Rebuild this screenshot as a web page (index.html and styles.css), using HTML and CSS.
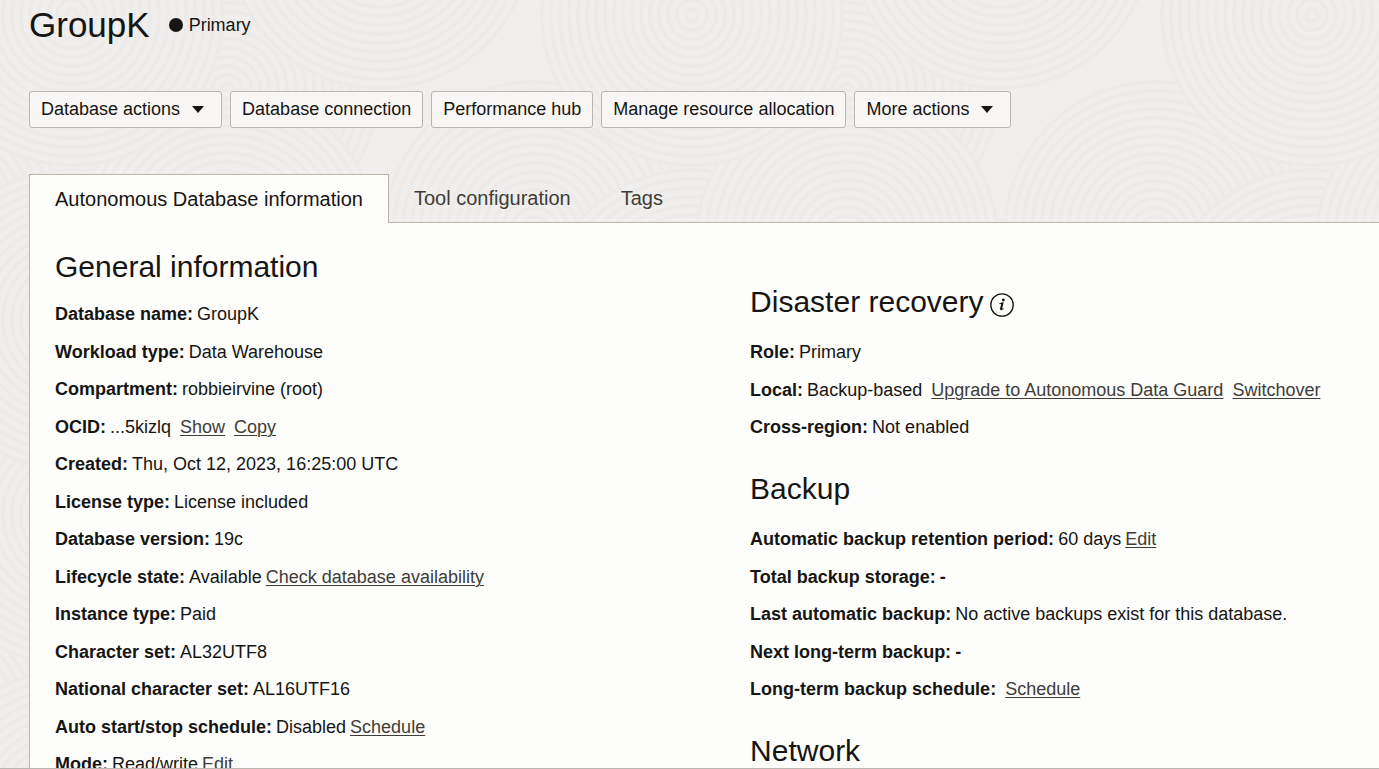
FILE: index.html
```html
<!DOCTYPE html>
<html lang="en">
<head>
<meta charset="utf-8">
<title>GroupK</title>
<link rel="stylesheet" href="styles.css">
</head>
<body>
<svg class="backdrop" aria-hidden="true">
  <defs>
    <radialGradient id="ring" gradientUnits="userSpaceOnUse" cx="0" cy="0" r="9" spreadMethod="repeat">
      <stop offset="0" stop-color="#f0efed"/>
      <stop offset="0.35" stop-color="#f0efed"/>
      <stop offset="0.7" stop-color="#ebeae8"/>
      <stop offset="1" stop-color="#f0efed"/>
    </radialGradient>
    <circle id="disc" r="152" fill="url(#ring)"/>
    <g id="cluster">
      <use href="#disc" x="0" y="-215"/>
      <use href="#disc" x="155" y="90"/>
      <use href="#disc" x="0" y="320"/>
      <use href="#disc" x="310" y="370"/>
      <use href="#disc" x="155" y="240"/>
      <use href="#disc" x="463" y="232"/>
      <use href="#disc" x="308" y="-62"/>
      <use href="#disc" x="0" y="15"/>
    </g>
    <pattern id="waves" patternUnits="userSpaceOnUse" x="72" y="0" width="620" height="500">
      <rect width="620" height="500" fill="#f0efed"/>
      <use href="#cluster" x="0" y="500"/>
      <use href="#cluster" x="620" y="500"/>
      <use href="#cluster" x="0" y="0"/>
      <use href="#cluster" x="620" y="0"/>
    </pattern>
  </defs>
  <rect width="100%" height="100%" fill="url(#waves)"/>
</svg>
<div class="app">
  <main class="page">
    <header class="heading">
      <h1 class="title">GroupK</h1>
      <span class="status"><span class="dot"></span>Primary</span>
    </header>
    <div class="actions">
      <button class="btn btn-menu" type="button">Database actions<svg class="caret" viewBox="0 0 12 7" aria-hidden="true"><path d="M0 0h12L6 7z"/></svg></button>
      <button class="btn" type="button">Database connection</button>
      <button class="btn" type="button">Performance hub</button>
      <button class="btn" type="button">Manage resource allocation</button>
      <button class="btn btn-menu" type="button">More actions<svg class="caret" viewBox="0 0 12 7" aria-hidden="true"><path d="M0 0h12L6 7z"/></svg></button>
    </div>
    <div class="tabs" role="tablist">
      <button class="tab tab-active" type="button" role="tab" aria-selected="true">Autonomous Database information</button>
      <button class="tab" type="button" role="tab" aria-selected="false">Tool configuration</button>
      <button class="tab" type="button" role="tab" aria-selected="false">Tags</button>
    </div>
    <div class="panel" role="tabpanel">
      <section class="column">
        <h2 class="section-title">General information</h2>
        <dl class="facts">
          <div class="fact"><dt>Database name:</dt><dd>GroupK</dd></div>
          <div class="fact"><dt>Workload type:</dt><dd>Data Warehouse</dd></div>
          <div class="fact"><dt>Compartment:</dt><dd>robbieirvine (root)</dd></div>
          <div class="fact fact-wide"><dt>OCID:</dt><dd>...5kizlq</dd><dd><a href="#">Show</a></dd><dd><a href="#">Copy</a></dd></div>
          <div class="fact"><dt>Created:</dt><dd>Thu, Oct 12, 2023, 16:25:00 UTC</dd></div>
          <div class="fact"><dt>License type:</dt><dd>License included</dd></div>
          <div class="fact"><dt>Database version:</dt><dd>19c</dd></div>
          <div class="fact"><dt>Lifecycle state:</dt><dd>Available</dd><dd><a href="#">Check database availability</a></dd></div>
          <div class="fact"><dt>Instance type:</dt><dd>Paid</dd></div>
          <div class="fact"><dt>Character set:</dt><dd>AL32UTF8</dd></div>
          <div class="fact"><dt>National character set:</dt><dd>AL16UTF16</dd></div>
          <div class="fact"><dt>Auto start/stop schedule:</dt><dd>Disabled</dd><dd><a href="#">Schedule</a></dd></div>
          <div class="fact"><dt>Mode:</dt><dd>Read/write</dd><dd><a href="#">Edit</a></dd></div>
        </dl>
      </section>
      <div class="column column-side">
        <section>
          <h2 class="section-title">Disaster recovery<svg class="info" viewBox="0 0 24 24" role="img" aria-label="Information"><circle cx="12" cy="12" r="11.2" fill="none" stroke="currentColor" stroke-width="1.3"/><circle cx="13.3" cy="7" r="1.4" fill="currentColor"/><path d="M9.6 10.8c1-.3 2-.6 3-.9l-1.7 6c-.2.9.2 1 1.2.4l1.3-.9" fill="none" stroke="currentColor" stroke-width="1.2"/><path d="M12.6 10l-1.8 6.4" stroke="currentColor" stroke-width="1.9"/></svg></h2>
          <dl class="facts">
            <div class="fact"><dt>Role:</dt><dd>Primary</dd></div>
            <div class="fact fact-wide"><dt>Local:</dt><dd>Backup-based</dd><dd><a href="#">Upgrade to Autonomous Data Guard</a></dd><dd><a href="#">Switchover</a></dd></div>
            <div class="fact"><dt>Cross-region:</dt><dd>Not enabled</dd></div>
          </dl>
        </section>
        <section>
          <h2 class="section-title">Backup</h2>
          <dl class="facts">
            <div class="fact"><dt>Automatic backup retention period:</dt><dd>60 days</dd><dd><a href="#">Edit</a></dd></div>
            <div class="fact"><dt>Total backup storage:</dt><dd class="empty">-</dd></div>
            <div class="fact"><dt>Last automatic backup:</dt><dd>No active backups exist for this database.</dd></div>
            <div class="fact"><dt>Next long-term backup:</dt><dd class="empty">-</dd></div>
            <div class="fact fact-link"><dt>Long-term backup schedule:</dt><dd><a href="#">Schedule</a></dd></div>
          </dl>
        </section>
        <section>
          <h2 class="section-title">Network</h2>
        </section>
      </div>
    </div>
  </main>
  <footer class="footer"></footer>
</div>
</body>
</html>
```
FILE: styles.css
```css
* {
  box-sizing: border-box;
}

body {
  margin: 0;
  background: #f0efed;
  color: #161513;
  font-family: "Liberation Sans", Arial, sans-serif;
  font-size: 18px;
  line-height: 24px;
}

h1, h2, dl, dt, dd {
  margin: 0;
}

a {
  color: #403c38;
  text-decoration: underline;
  text-decoration-thickness: 1px;
  text-underline-offset: 2px;
}

.backdrop {
  position: absolute;
  inset: 0;
  width: 100%;
  height: 100%;
}

.app {
  position: relative;
  display: flex;
  flex-direction: column;
  height: 100vh;
}

.page {
  display: flex;
  flex: 1;
  flex-direction: column;
  min-height: 0;
  padding-left: 29px;
  overflow: hidden;
}

.heading {
  display: flex;
  align-items: center;
  gap: 19px;
  padding-top: 4px;
}

.title {
  font-size: 35px;
  font-weight: 400;
  line-height: 42px;
}

.status {
  display: flex;
  align-items: center;
  gap: 6px;
}

.dot {
  width: 14px;
  height: 14px;
  border-radius: 50%;
  background: #161513;
}

.actions {
  display: flex;
  flex-wrap: wrap;
  gap: 8px;
  padding: 45px 24px 46px 0;
}

.btn {
  display: flex;
  align-items: center;
  gap: 12px;
  padding: 5px 11px 6px;
  border: 1px solid #b9b5af;
  border-radius: 3px;
  background: #f8f7f5;
  color: inherit;
  font: inherit;
}

.btn-menu {
  padding-right: 17px;
}

.caret {
  width: 12px;
  height: 7px;
  fill: #161513;
}

.tabs {
  position: relative;
  display: flex;
}

.tab {
  padding: 11px 24px 12px;
  border: 1px solid transparent;
  border-bottom: 0;
  background: transparent;
  color: #403c38;
  font: inherit;
  font-size: 20px;
}

.tab-active {
  margin-bottom: -1px;
  padding: 12px 25px;
  border-color: #b9b5a9;
  background: #fdfdfb;
  color: #161513;
}

.panel {
  display: grid;
  flex: 1 0 auto;
  grid-template-columns: 21fr 19fr;
  padding: 26px 0 25px 25px;
  border-top: 1px solid #b9b5a9;
  border-left: 1px solid #b9b5af;
  background: #fdfdfb;
}

.column-side {
  padding-top: 35px;
}

.section-title {
  display: flex;
  align-items: center;
  gap: 6px;
  margin-bottom: 17px;
  font-size: 30px;
  font-weight: 400;
  line-height: 36px;
}

.column-side .section-title {
  margin-bottom: 20px;
}

.info {
  width: 24px;
  height: 24px;
  margin-top: 5px;
}

.facts {
  display: flex;
  flex-direction: column;
}

.fact {
  display: flex;
  gap: 4px;
  margin-bottom: 14px;
}

.fact:nth-child(even) {
  margin-bottom: 13px;
}

.fact-wide,
.fact-link {
  gap: 9px;
}

.fact-wide dt {
  margin-right: -5px;
}

.facts dt,
.empty {
  font-weight: 700;
}

section + section {
  padding-top: 18px;
}

.footer {
  border-top: 1px solid #b9b5af;
}
```
